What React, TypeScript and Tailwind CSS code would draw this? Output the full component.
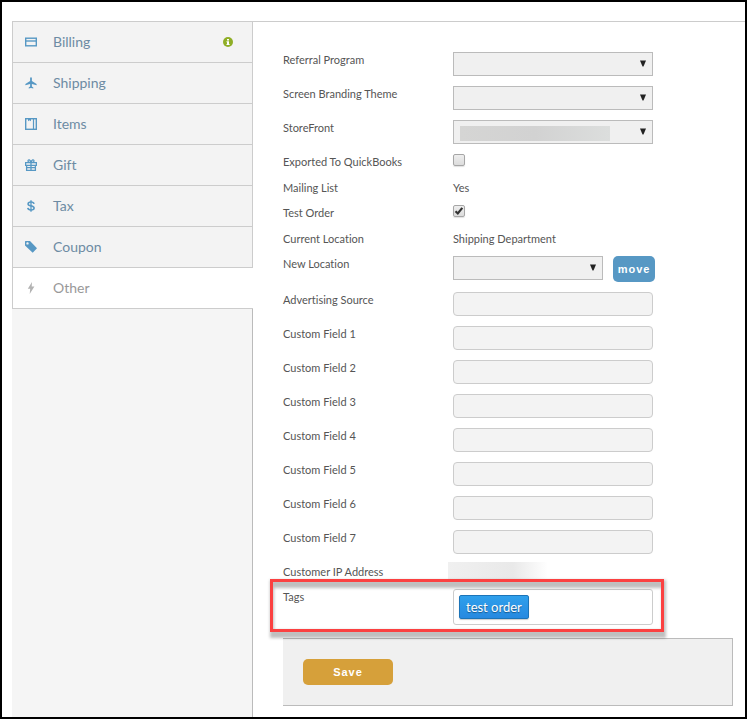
import React, { useState } from "react";
import { clsx } from "clsx";

const iconClass = "block h-3 w-3";

const BillingIcon = () => (
    <svg viewBox="0 0 12 12" className={iconClass} fill="none" stroke="currentColor">
        <rect x="0.7" y="2.2" width="10.6" height="7.6" strokeWidth="1.4" />
        <path d="M0.5 5h11" strokeWidth="1.4" />
    </svg>
);

const ShippingIcon = () => (
    <svg viewBox="0 0 12 12" className={iconClass} fill="currentColor">
        <path d="M6 0.2c.6 0 .9.6.9 1.4v2.5l4.7 2.8v1.3L6.9 6.9v2.5l1.4 1.1v.9L6 10.9l-2.3.5v-.9l1.4-1.1V6.9L.4 8.2V6.9l4.7-2.8V1.6C5.1.8 5.4.2 6 .2z" />
    </svg>
);

const ItemsIcon = () => (
    <svg viewBox="0 0 12 12" className={iconClass} fill="none" stroke="currentColor">
        <rect x="0.7" y="0.7" width="10.6" height="10.6" strokeWidth="1.4" />
        <path d="M8.5 0.5v11" strokeWidth="1.2" />
        <path d="M3 0.5h3v2.8L4.5 2.3 3 3.3z" fill="currentColor" stroke="none" />
    </svg>
);

const GiftIcon = () => (
    <svg viewBox="0 0 12 12" className={iconClass} fill="none" stroke="currentColor">
        <path d="M0.6 3.6h10.8v2.8H.6zM1.6 6.5v4.9h8.8v-4.9M6 3.5v8M1.6 8.6h8.8" strokeWidth="1.3" />
        <path d="M5.9 3.4C3.6 3.4 2.9 2.6 3 1.7 3.2.3 5.4.3 5.9 3.4zM6.1 3.4c2.3 0 3-.8 2.9-1.7C8.8.3 6.6.3 6.1 3.4z" strokeWidth="1.2" />
    </svg>
);

const TaxIcon = () => (
    <svg viewBox="0 0 12 12" className={iconClass} fill="none" stroke="currentColor">
        <path d="M9 3.9C8.8 2.6 7.7 2 6 2S3.1 2.7 3.1 3.9C3.1 6.6 9.1 5.2 9.1 8c0 1.3-1.2 2-3.1 2S3 9.3 2.8 7.9" strokeWidth="1.6" />
        <path d="M6 .2v11.6" strokeWidth="1.3" />
    </svg>
);

const CouponIcon = () => (
    <svg viewBox="0 0 12 12" className={iconClass} fill="currentColor" fillRule="evenodd">
        <path d="M0.5 0h4.5L12 7.2 7.7 11.8 0 4.6V.5zM2.5 1.2a1.2 1.2 0 1 0 0 2.4 1.2 1.2 0 0 0 0-2.4z" />
    </svg>
);

const OtherIcon = () => (
    <svg viewBox="0 0 12 12" className={iconClass} fill="currentColor">
        <path d="M7 0 2.8 6.7h2.4L4.7 12 9.4 4.6H6.7z" />
    </svg>
);

const tabs = [
    { name: "Billing", icon: BillingIcon, info: true },
    { name: "Shipping", icon: ShippingIcon },
    { name: "Items", icon: ItemsIcon },
    { name: "Gift", icon: GiftIcon },
    { name: "Tax", icon: TaxIcon },
    { name: "Coupon", icon: CouponIcon },
    { name: "Other", icon: OtherIcon },
];

const customFields = [1, 2, 3, 4, 5, 6, 7];

function Sidebar() {
    const [active, setActive] = useState("Other");

    return (
        <nav className="flex w-[241px] shrink-0 flex-col">
            {tabs.map(({ name, icon: Icon, info }) => (
                <button
                    key={name}
                    onClick={() => setActive(name)}
                    className={clsx(
                        "flex h-[41px] items-center border-b border-l border-[#ccc] pl-3 text-left text-[14px]",
                        active === name ? "bg-white text-[#999]" : "border-r bg-[#f3f3f3] text-[#6d8ba3]"
                    )}
                >
                    <span className={active === name ? "text-[#b3b3b3]" : "text-[#5798c4]"}>
                        <Icon />
                    </span>
                    <span className="ml-4 flex-1 pb-0.5">{name}</span>
                    {info && (
                        <svg viewBox="0 0 10 10" className="mr-[19px] h-2.5 w-2.5">
                            <circle cx="5" cy="5" r="5" fill="#8fae26" />
                            <path d="M4 2h2v1.6H4zM3.5 4.3H6V7h.6v1H3.5V7H4V5.2h-.5z" fill="#fff" />
                        </svg>
                    )}
                </button>
            ))}
            <div className="flex-1 border-r border-[#bbb] bg-[#f5f5f5]" />
        </nav>
    );
}

function Row({ label, className, children }: { label: string; className: string; children?: React.ReactNode }) {
    return (
        <div className={clsx("flex items-start", className)}>
            <span className="w-[170px] shrink-0">{label}</span>
            {children}
        </div>
    );
}

function SelectBox({ className, children }: { className: string; children?: React.ReactNode }) {
    return (
        <div className={clsx("flex h-6 items-center border border-[#bbb] bg-[#f0f0f0] pr-[6px] pl-[6px]", className)}>
            {children}
            <svg viewBox="0 0 6 7" className="mb-px ml-auto h-[7px] w-[6px]">
                <path d="M0 0.5h6L3.5 6.5h-1z" fill="#222" />
            </svg>
        </div>
    );
}

function CheckBox({ checked }: { checked?: boolean }) {
    return (
        <span className="flex h-3 w-3 items-center justify-center rounded-[2px] border border-[#a6a6a6] bg-linear-to-b from-[#eee] to-[#dcdcdc] shadow-[0_1px_1px_rgba(0,0,0,0.12)]">
            {checked && (
                <svg viewBox="0 0 10 10" className="h-2.5 w-2.5 shrink-0">
                    <path d="M1.5 5.3 3.8 7.5 8.3 1.9" fill="none" stroke="#333" strokeWidth="2.2" />
                </svg>
            )}
        </span>
    );
}

const TextField = () => (
    <input type="text" className="h-6 w-[200px] rounded-[4px] border border-[#ccc] bg-[#f3f3f3] px-2" />
);

export default function App() {
    return (
        <div className="h-[719px] w-[747px] overflow-hidden border-2 border-black bg-white pt-[19px] pl-[10px] font-['Lato',sans-serif] [font-variant-ligatures:none]">
            <div className="flex h-full border-t border-[#ccc]">
                <Sidebar />
                <main className="relative flex-1 pt-[30px] pl-[30px] text-[11px] leading-4 text-[#555]">
                    <Row label="Referral Program" className="h-[34px]">
                        <SelectBox className="w-[200px]" />
                    </Row>
                    <Row label="Screen Branding Theme" className="h-[34px]">
                        <SelectBox className="w-[200px]" />
                    </Row>
                    <Row label="StoreFront" className="h-[34px]">
                        <SelectBox className="w-[200px]">
                            <span className="mt-[3px] h-[15px] w-[150px] bg-linear-to-r from-[#d5d5d4] via-[#d2d2d2] to-[#dcdedd]" />
                        </SelectBox>
                    </Row>
                    <Row label="Exported To QuickBooks" className="h-[26px]">
                        <CheckBox />
                    </Row>
                    <Row label="Mailing List" className="h-[25px]">
                        <span>Yes</span>
                    </Row>
                    <Row label="Test Order" className="h-[26px]">
                        <CheckBox checked />
                    </Row>
                    <Row label="Current Location" className="h-[25px]">
                        <span>Shipping Department</span>
                    </Row>
                    <Row label="New Location" className="h-9">
                        <SelectBox className="w-[150px]" />
                        <button className="ml-[10px] h-[26px] w-[42px] rounded-[5px] bg-[#5798c4] font-['Liberation_Sans',sans-serif] text-[11px] font-bold tracking-[1px] text-white">
                            move
                        </button>
                    </Row>
                    <Row label="Advertising Source" className="h-[34px]">
                        <TextField />
                    </Row>
                    {customFields.map((n) => (
                        <Row key={n} label={`Custom Field ${n}`} className="h-[34px]">
                            <TextField />
                        </Row>
                    ))}
                    <Row label="Customer IP Address" className="h-[25px]">
                        <span className="-mt-[2px] -ml-[5px] h-5 w-[100px] bg-linear-to-r from-[#f0f0f0] via-[#e9e9e9] via-65% to-white" />
                    </Row>
                    <Row label="Tags" className="h-[49px]">
                        <div className="flex h-9 w-[200px] items-start rounded-[3px] border border-[#ccc] pt-[5px] pl-[5px]">
                            <span className="h-6 rounded-[2px] border border-[#1c74b8] bg-linear-to-b from-[#2fa0ec] to-[#2789e0] px-[6px] text-[13px] leading-[23px] text-white shadow-[0_1px_1px_rgba(0,0,0,0.2)] [text-shadow:0_1px_1px_rgba(0,0,0,0.4)]">
                                test order
                            </span>
                        </div>
                    </Row>
                    <div className="h-[68px] w-[450px] border-y border-r border-[#bbb] bg-[#f0f0f0] pt-5 pl-5">
                        <button className="h-[26px] w-[90px] rounded-[5px] bg-[#d6a03a] font-['Liberation_Sans',sans-serif] text-[11px] font-bold tracking-[1px] text-white">
                            Save
                        </button>
                    </div>
                    {/* highlight around the tags row, with its soft shadow underneath */}
                    <div className="pointer-events-none absolute top-[558px] left-[17px] h-[58px] w-[396px] border-x-4 border-y-8 border-black/25 blur-[1.5px]" />
                    <div className="pointer-events-none absolute top-[557px] left-[17px] h-[53px] w-[394px] border-3 border-[#fb4141]" />
                </main>
            </div>
        </div>
    );
}
